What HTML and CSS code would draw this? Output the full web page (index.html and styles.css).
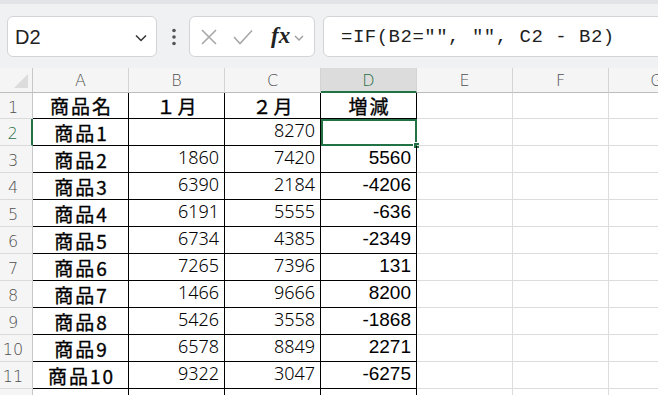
FILE: index.html
```html
<!DOCTYPE html>
<html>
<head>
	<title>Sheet</title>
	<link rel="stylesheet" href="styles.css">
</head>
<body>
	<div class="topband"></div>
	<div class="toolbar">
		<div class="namebox">
			<span class="name">D2</span>
			<svg class="chev" width="12" height="8" viewBox="0 0 12 8"><polyline points="1,1.5 6,6.5 11,1.5" fill="none" stroke="#333" stroke-width="1.5"/></svg>
		</div>
		<div class="dots">
			<svg width="6" height="18" viewBox="0 0 6 18"><circle cx="3" cy="2.5" r="1.8" fill="#555"/><circle cx="3" cy="9" r="1.8" fill="#555"/><circle cx="3" cy="15.5" r="1.8" fill="#555"/></svg>
		</div>
		<div class="fnbox">
			<svg class="ico" width="16" height="16" viewBox="0 0 16 16"><path d="M1 1 L15 15 M15 1 L1 15" stroke="#a8a8a8" stroke-width="1.6" fill="none"/></svg>
			<svg class="ico check" width="20" height="16" viewBox="0 0 20 16"><polyline points="1,8 7,14.5 19,1.5" stroke="#a8a8a8" stroke-width="1.6" fill="none"/></svg>
			<span class="fx">fx</span>
			<svg class="ico small" width="10" height="6" viewBox="0 0 10 6"><polyline points="1,1 5,5 9,1" stroke="#999" stroke-width="1.3" fill="none"/></svg>
		</div>
		<div class="formula">=IF(B2="", "", C2 - B2)</div>
	</div>

	<div class="sheet" id="sheet"></div>

	<script type="text/javascript">
		const rows = [
			["商品名", "１月", "２月", "増減"],
			["商品1", "", "8270", ""],
			["商品2", "1860", "7420", "5560"],
			["商品3", "6390", "2184", "-4206"],
			["商品4", "6191", "5555", "-636"],
			["商品5", "6734", "4385", "-2349"],
			["商品6", "7265", "7396", "131"],
			["商品7", "1466", "9666", "8200"],
			["商品8", "5426", "3558", "-1868"],
			["商品9", "6578", "8849", "2271"],
			["商品10", "9322", "3047", "-6275"],
			["", "", "", ""]
		];
		const cols = ["A", "B", "C", "D", "E", "F", "G"];
		let html = `<div class="corner"><svg width="14" height="14" viewBox="0 0 14 14"><polygon points="14,0 14,14 0,14" fill="#dcdcdc"/></svg></div>`;
		for(let i=0;i<cols.length;i++){
			html += `<div class="colhead${cols[i]=="D" ? " sel" : ""}">${cols[i]}</div>`;
		}
		for(let r=0;r<rows.length;r++){
			html += `<div class="rowhead${r==1 ? " sel" : ""}">${r<11 ? r+1 : ""}</div>`;
			for(let c=0;c<cols.length;c++){
				let cls = "cell";
				let text = c<4 ? rows[r][c] : "";
				if(c<4) cls += " boxed";
				if(r==0) cls += " title";
				else if(c==0) cls += " name";
				else if(c==1 || c==2) cls += " num";
				else if(c==3) cls += " diff";
				if(r==1 && c==3) cls += " active";
				html += `<div class="${cls}">${text}${r==1 && c==3 ? '<span class="handle"></span>' : ''}</div>`;
			}
		}
		document.querySelector("#sheet").innerHTML = html;
	</script>
</body>
</html>
```

FILE: styles.css
```css
* {
	margin:0px;
	padding:0px;
	box-sizing:border-box;
}
body {
	width:658px;
	height:395px;
	overflow:hidden;
	background:#fff;
	font-family:"Liberation Sans", sans-serif;
}
.topband {
	height:4px;
	background:#e2e4e7;
}
.toolbar {
	height:64px;
	padding:12px 0 11px 7px;
	background:#eff1f3;
	display:flex;
	align-items:stretch;
}
.namebox {
	width:150px;
	background:#fff;
	border:1px solid #d2d4d7;
	border-radius:6px;
	display:flex;
	align-items:center;
	justify-content:space-between;
	padding:2px 9px 0 7px;
}
.namebox .name {
	font-size:20px;
	color:#222;
}
.namebox .chev {
	margin-top:1px;
}
.dots {
	width:32px;
	display:flex;
	align-items:center;
	justify-content:center;
	padding-left:1px;
}
.fnbox {
	width:126px;
	background:#fff;
	border:1px solid #d2d4d7;
	border-radius:6px;
	display:flex;
	align-items:center;
	padding:0 0 0 11px;
}
.fnbox .ico {
	display:block;
}
.fnbox .check {
	margin-left:16px;
}
.fnbox .fx {
	font-family:"Liberation Serif", serif;
	font-style:italic;
	font-weight:bold;
	font-size:23px;
	color:#222;
	margin-left:18px;
	margin-top:-2px;
}
.fnbox .small {
	margin-left:4px;
	margin-top:2px;
}
.formula {
	flex:1;
	margin-left:8px;
	margin-right:-10px;
	background:#fff;
	border:1px solid #d2d4d7;
	border-radius:6px;
	font-family:"Liberation Mono", monospace;
	font-size:19px;
	letter-spacing:0.5px;
	color:#1f1f1f;
	display:flex;
	align-items:center;
	padding:1px 0 0 17px;
	white-space:pre;
}
.sheet {
	display:grid;
	grid-template-columns:33px repeat(7, 96px);
	grid-template-rows:25px 26px repeat(11, 27px);
}
.corner,
.colhead,
.rowhead {
	background:#f5f5f5;
	color:#505050;
	font-family:"DejaVu Sans", sans-serif;
	font-weight:200;
	font-size:16px;
	display:flex;
	align-items:center;
	justify-content:center;
}
.corner {
	border-right:1px solid #c8c8c8;
	border-bottom:1px solid #bdbdbd;
	align-items:flex-end;
	justify-content:flex-end;
	padding:0 4px 4px 0;
}
.colhead {
	border-right:1px solid #d4d4d4;
	border-bottom:1px solid #bdbdbd;
	padding-top:1px;
}
.colhead.sel {
	background:#dcdcdc;
	color:#1e6e42;
	border-bottom:2px solid #217346;
}
.rowhead {
	border-right:1px solid #c8c8c8;
	border-bottom:1px solid #dadada;
	padding:3px 6px 0 0;
}
.rowhead.sel {
	color:#1e6e42;
	border-right:2px solid #217346;
}
.cell {
	border-right:1px solid #dcdcdc;
	border-bottom:1px solid #dcdcdc;
	display:flex;
	align-items:flex-end;
	padding:0 5px 3px 5px;
	color:#000;
	white-space:nowrap;
	position:relative;
}
.cell.boxed {
	border-right-color:#000;
	border-bottom-color:#000;
}
.cell.title,
.cell.name {
	justify-content:center;
	font-family:"Noto Sans CJK JP", sans-serif;
	font-weight:normal;
	-webkit-text-stroke:0.35px #000;
	font-size:19px;
	letter-spacing:2px;
	line-height:22px;
	padding:0 0 1px 2px;
}
.cell.num {
	justify-content:flex-end;
	font-family:"Noto Sans", "DejaVu Sans", sans-serif;
	font-weight:300;
	font-size:18px;
	color:#000;
}
.cell.diff {
	justify-content:flex-end;
	font-size:19px;
}
.cell.active {
	outline:2px solid #217346;
	outline-offset:-2px;
}
.handle {
	position:absolute;
	right:-4px;
	bottom:-4px;
	width:7px;
	height:7px;
	background:#217346;
	border:1px solid #fff;
}
```
